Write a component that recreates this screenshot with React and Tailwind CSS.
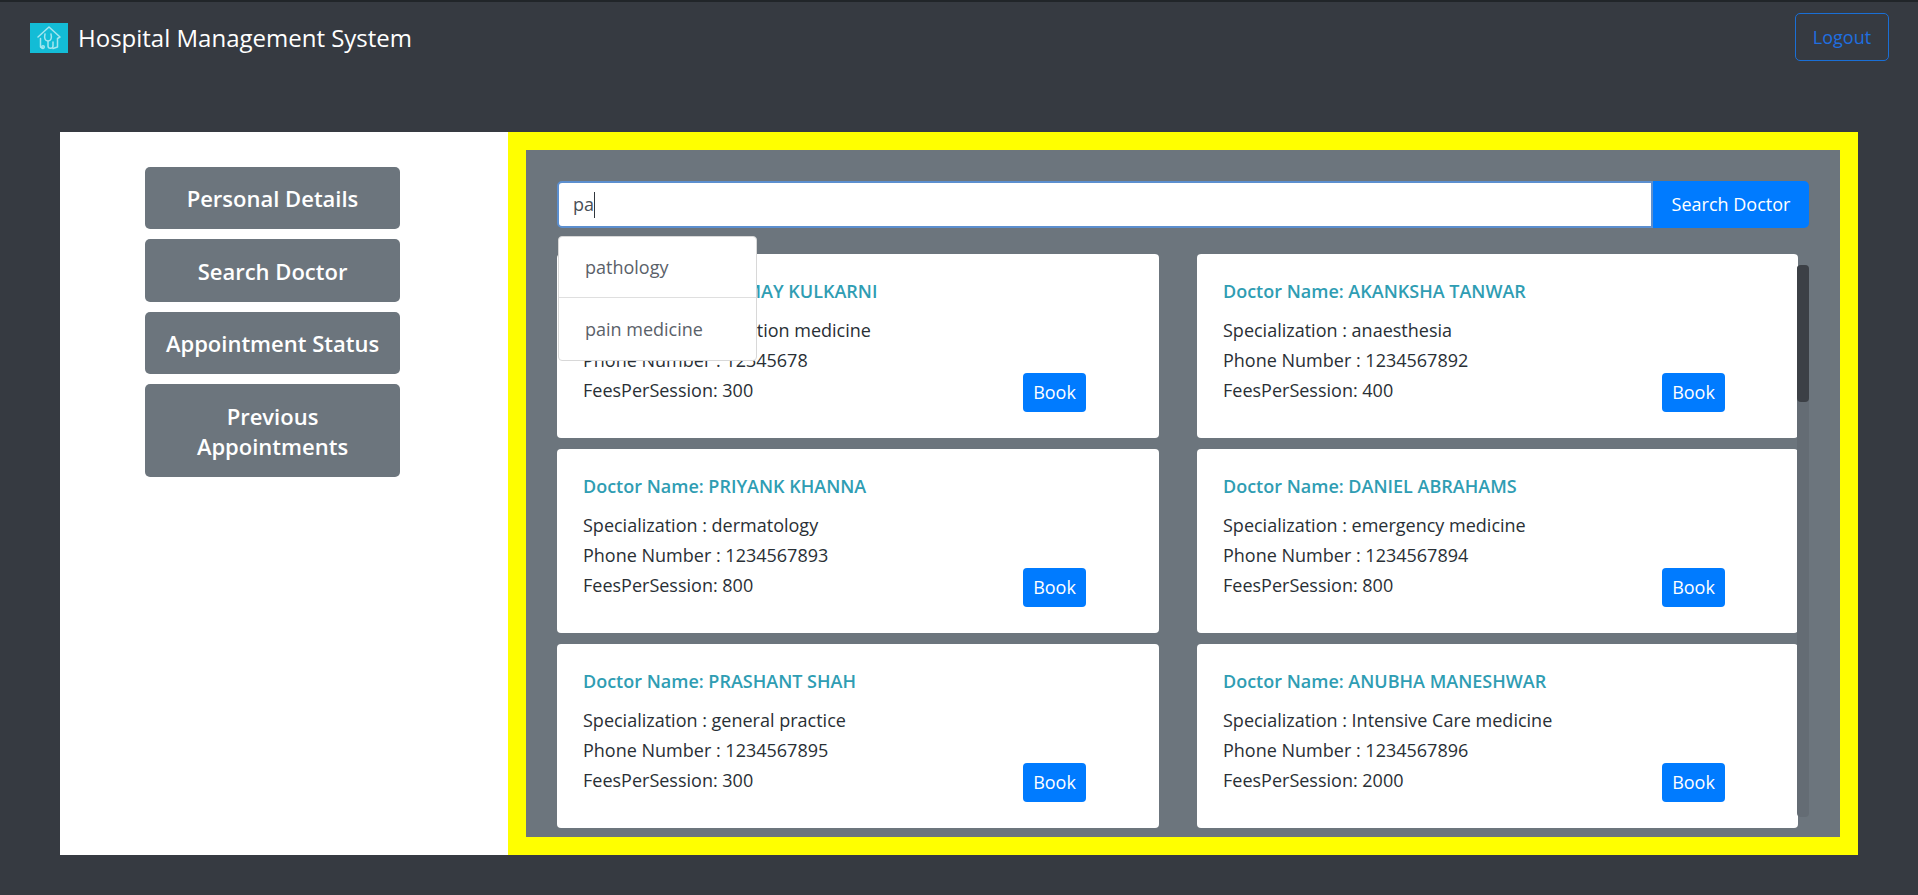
import React from "react";

const doctors = [
  ["TANMAY KULKARNI", "addiction medicine", "12345678", "300"],
  ["AKANKSHA TANWAR", "anaesthesia", "1234567892", "400"],
  ["PRIYANK KHANNA", "dermatology", "1234567893", "800"],
  ["DANIEL ABRAHAMS", "emergency medicine", "1234567894", "800"],
  ["PRASHANT SHAH", "general practice", "1234567895", "300"],
  ["ANUBHA MANESHWAR", "Intensive Care medicine", "1234567896", "2000"],
];

const nav = [
  ["Personal Details", "h-[62px]"],
  ["Search Doctor", "h-[63px]"],
  ["Appointment Status", "h-[62px]"],
  ["Previous Appointments", "h-[93px]"],
];

function Logo() {
  return (
    <svg viewBox="0 0 38 30" className="w-[38px] h-[30px] shrink-0">
      <rect width="38" height="30" fill="#13bcd6" />
      <g fill="none" stroke="#a5e6ef" strokeWidth="1.5" strokeLinecap="round" strokeLinejoin="round">
        <path d="M8 14 L19 4 L30 14 L27.5 15.5 L27.5 24 L23 25.5 M10.5 15.5 L10.5 24 L13 25.5" />
        <path d="M15 11 C14 15 15 18 18 18 C21 18 22 15 21 11" />
        <path d="M18 18 L18 23 C18 26 23 26 23 23 L23 19" />
        <circle cx="13" cy="24" r="1.3" />
      </g>
    </svg>
  );
}

function Card({ d }) {
  return (
    <div className="relative h-[184px] bg-white rounded-[4px] pl-[26px] pt-[24px] text-[#292f35]">
      <div className="text-[18px] leading-[27px] font-semibold text-[#2f9db3]">Doctor Name: {d[0]}</div>
      <div className="mt-[10px] text-[18px] leading-[30px]">
        <div>Specialization : {d[1]}</div>
        <div>Phone Number : {d[2]}</div>
        <div>FeesPerSession: {d[3]}</div>
      </div>
      <button className="absolute right-[73px] top-[119px] w-[63px] h-[39px] bg-[#007bff] text-white rounded-[4px] text-[18px]">Book</button>
    </div>
  );
}

export default function App() {
  return (
    <div className="w-[1918px] h-[895px] overflow-hidden bg-[#363a41] border-t-2 border-[#212529] font-['Open_Sans','Noto_Sans',sans-serif]">
      <header className="h-[130px] pl-[30px] pr-[29px] flex items-start justify-between">
        <div className="flex items-center gap-[10px] mt-[21px]">
          <Logo />
          <span className="text-white text-[24px] leading-[30px]">Hospital Management System</span>
        </div>
        <button className="mt-[11px] w-[94px] h-[48px] border border-[#1a6fd6] rounded-[5px] text-[#1f6fe0] text-[18px]">Logout</button>
      </header>
      <main className="mx-[60px] h-[723px] flex">
        <aside className="w-[450px] bg-white pt-[35px] pl-[85px]">
          <div className="w-[255px] flex flex-col gap-[10px]">
            {nav.map(([t, h]) => (
              <div key={t} className={`${h} bg-[#6c757d] rounded-[5px] flex items-center justify-center text-center text-white font-semibold text-[22px] leading-[30px] px-[10px]`}>{t}</div>
            ))}
          </div>
        </aside>
        <section className="w-[1350px] border-[18px] border-[#ffff00] bg-[#6c757d] pt-[31px] pl-[31px] pr-[31px] relative">
          <div className="flex h-[47px] w-[1252px]">
            <div className="flex-1 relative bg-white rounded-l-[5px] border-2 border-[#5c8fcf] flex items-center pl-[14px] text-[18px] text-[#495057]">
              pa<span className="w-px h-[26px] bg-[#30363c]" />
            </div>
            <button className="w-[156px] bg-[#007bff] text-white rounded-r-[5px] text-[18px]">Search Doctor</button>
          </div>
          <div className="relative mt-[26px] w-[1252px]">
            <div className="grid grid-cols-[602px_601px] gap-x-[38px] gap-y-[11px]">
              {doctors.map((d) => <Card key={d[0]} d={d} />)}
            </div>
            <div className="absolute left-[1240px] top-[11px] w-[12px] h-[552px] rounded-[4px] bg-[#646c74]">
              <div className="h-[137px] rounded-[4px] bg-[#3c4046]" />
            </div>
            <div className="absolute left-[1px] -top-[18px] w-[199px] h-[125px] bg-white border border-[#d8d8d8] rounded-[4px] text-[18px] text-[#5a6169]">
              <div className="h-[61px] pl-[26px] flex items-center border-b border-[#dfdfdf]">pathology</div>
              <div className="h-[62px] pl-[26px] flex items-center">pain medicine</div>
            </div>
          </div>
        </section>
      </main>
    </div>
  );
}
